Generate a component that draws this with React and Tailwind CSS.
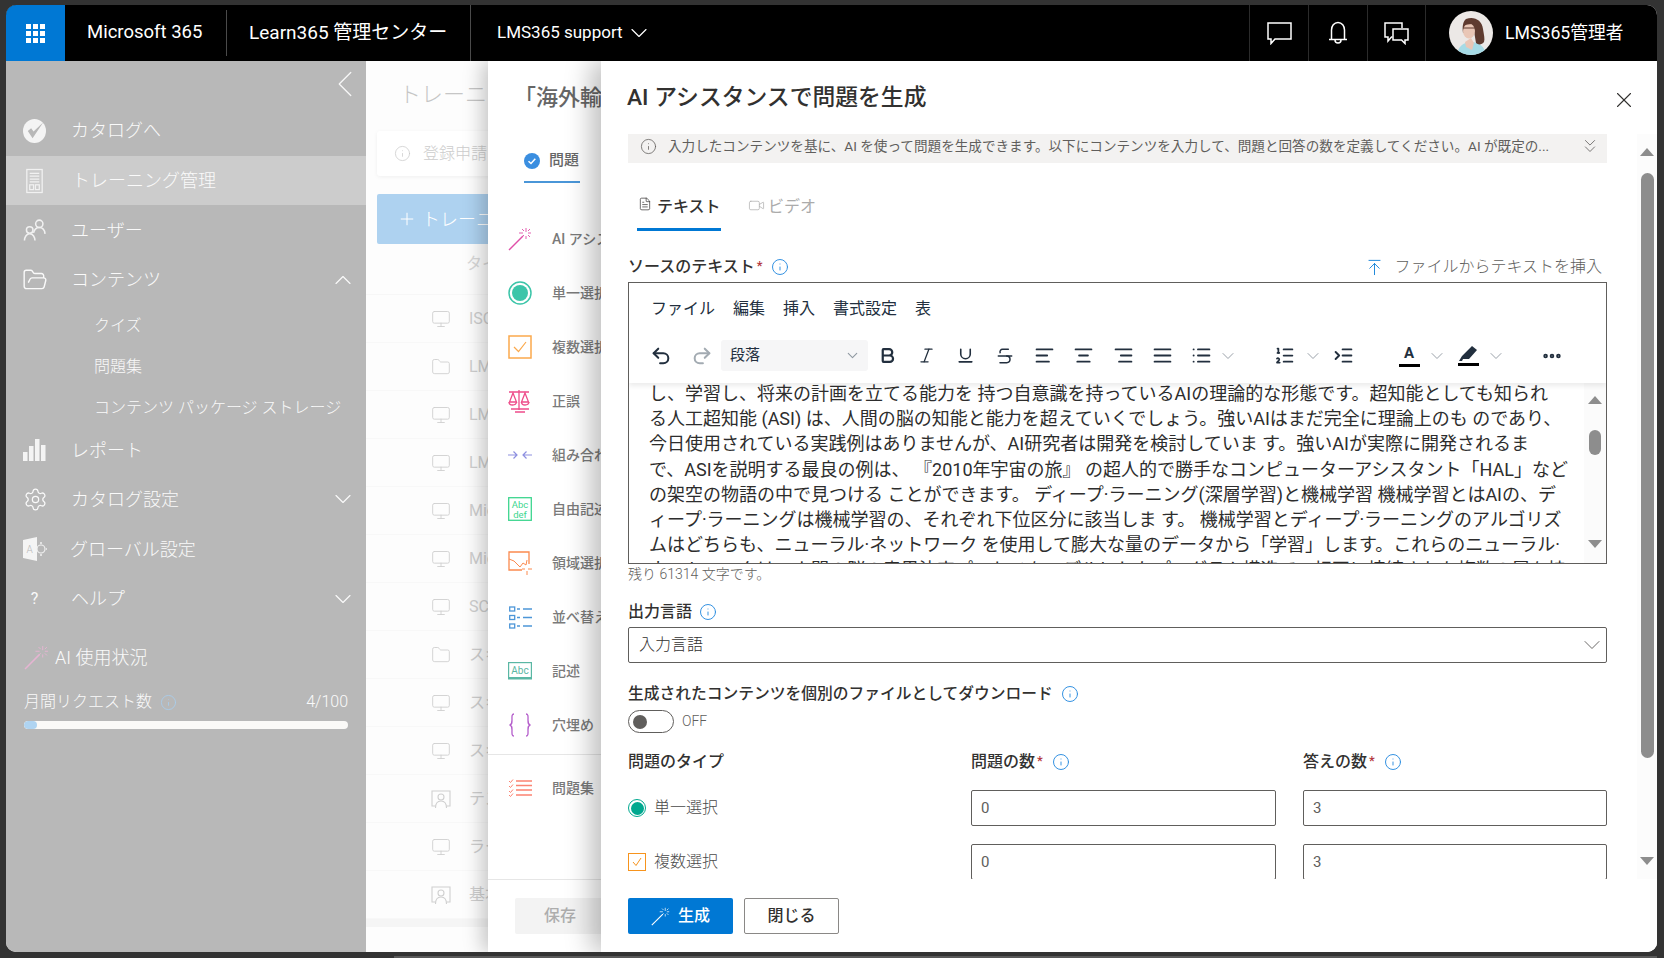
import React from "react";
import {
  ChevronDown,
  ChevronUp,
  ChevronLeft,
  ChevronsDown,
  X,
  Undo2,
  Redo2,
  Bold,
  Italic,
  Underline,
  Strikethrough,
  AlignLeft,
  AlignCenter,
  AlignRight,
  AlignJustify,
  List,
  ListOrdered,
  IndentIncrease,
  MoreHorizontal,
  Plus,
  Info,
  Monitor,
  Folder,
  FolderOpen,
  Settings,
  ArrowUpToLine,
  FileText,
  Video,
} from "lucide-react";

const FONT = "[font-family:Roboto,'Noto_Sans_CJK_JP',sans-serif]";

const Wand = ({ color, size = 24, spark }) => (
  <svg width={size} height={size} viewBox="0 0 24 24" fill="none" stroke={color} strokeWidth="1">
    <path d="M1 23 L15 9" strokeWidth="1.4" />
    <path d="M18 1v4M18 9v3M11 6h4M20 6h3M14 2l2 2M20 8l2 2M22 2l-2 2M14 10l2-2" stroke={spark || color} strokeWidth="0.9" />
  </svg>
);

const Sidebar = () => {
  const main = "flex items-center pl-[17px] pr-[9px] text-[18px] font-light text-[#fafafa]";
  const sub = "h-[41px] flex items-center pl-[88px] text-[16px] font-light text-[#fafafa] whitespace-nowrap";
  return (
    <div className="w-[360px] shrink-0 bg-[#b8b8b8] flex flex-col">
      <div className="h-[45px] flex items-center pl-[316px] pt-[1px]">
        <ChevronLeft size={46} strokeWidth={0.7} className="text-[#f5f5f5] shrink-0" />
      </div>
      <div className={`${main} h-[50px] pb-[1px]`}>
        <svg width="23" height="26" viewBox="0 0 24 26" className="shrink-0">
          <ellipse cx="12" cy="13" rx="12" ry="12.5" fill="#f4f4f4" />
          <path d="M5 13 L10 20.500 L21 4 L11 13.500 L8.500 10 Z" fill="#b8b8b8" />
        </svg>
        <span className="ml-[25px]">カタログへ</span>
      </div>
      <div className={`${main} h-[49px] bg-[#cccccc]`}>
        <svg width="23" height="26" viewBox="0 0 24 26" fill="none" stroke="#f1f1f1" strokeWidth="1.3" className="shrink-0">
          <rect x="4" y="1" width="16" height="24" />
          <path d="M7 5h10M7 8h10M7 11h10M7 14h10" />
          <rect x="7" y="17" width="4" height="5" />
          <rect x="13" y="17" width="4" height="5" />
        </svg>
        <span className="ml-[26px]">トレーニング管理</span>
      </div>
      <div className={`${main} h-[50px]`}>
        <svg width="23" height="24" viewBox="0 0 24 24" fill="none" stroke="#f1f1f1" strokeWidth="1.6" className="shrink-0">
          <circle cx="17" cy="5.500" r="3.800" />
          <circle cx="7" cy="12" r="3.400" />
          <path d="M1.500 23c0-3.500 2-7 5.500-7s5.500 3.500 5.500 7" />
          <path d="M11 15c1-4 3-5.500 6-5.500s5.500 2 6 6.500" />
        </svg>
        <span className="ml-[25px]">ユーザー</span>
      </div>
      <div className={`${main} h-[49px]`}>
        <FolderOpen size={26} strokeWidth={1.3} className="shrink-0 -ml-[1px]" />
        <span className="ml-[23px]">コンテンツ</span>
        <ChevronUp size={28} strokeWidth={1} className="ml-auto" />
      </div>
      <div className={`${sub} mt-[1px]`}>クイズ</div>
      <div className={sub}>問題集</div>
      <div className={sub}>コンテンツ パッケージ ストレージ</div>
      <div className={`${main} h-[48px] -mt-[2px]`}>
        <svg width="23" height="22" viewBox="0 0 23 22" fill="#f4f4f4" className="shrink-0">
          <rect x="0" y="13" width="4.500" height="9" />
          <rect x="6" y="7" width="4.500" height="15" />
          <rect x="12" y="0" width="4.500" height="22" />
          <rect x="18" y="6" width="4.500" height="16" />
        </svg>
        <span className="ml-[25px]">レポート</span>
      </div>
      <div className={`${main} h-[50px]`}>
        <Settings size={25} strokeWidth={1.2} className="shrink-0" />
        <span className="ml-[23px]">カタログ設定</span>
        <ChevronDown size={28} strokeWidth={1} className="ml-auto" />
      </div>
      <div className={`${main} h-[50px]`}>
        <svg width="24" height="24" viewBox="0 0 24 24" className="shrink-0">
          <path d="M0 3 L14 0 V24 L0 21Z" fill="#f4f4f4" />
          <text x="3.500" y="16" fontSize="10" fill="#b8b8b8" fontFamily="Roboto">A</text>
          <circle cx="18" cy="12" r="4" fill="none" stroke="#f1f1f1" strokeWidth="1.200" />
          <path d="M18 5v2M18 17v2M23 12h1" stroke="#f1f1f1" strokeWidth="1.500" />
        </svg>
        <span className="ml-[23px]">グローバル設定</span>
      </div>
      <div className={`${main} h-[49px]`}>
        <span className="w-[23px] text-center text-[16px] font-normal shrink-0">?</span>
        <span className="ml-[25px]">ヘルプ</span>
        <ChevronDown size={28} strokeWidth={1} className="ml-auto" />
      </div>
      <div className="flex items-center pl-[18px] mt-[21px] text-[18px] text-[#fafafa] font-light">
        <Wand color="#e6b4d2" size={25} />
        <span className="ml-[6px]">AI 使用状況</span>
      </div>
      <div className="flex items-center pl-[18px] pr-[18px] mt-[19px] text-[16px] text-[#fafafa] font-light">
        <span>月間リクエスト数</span>
        <Info size={17} strokeWidth={1.2} className="ml-[8px] text-[#a9cdec]" />
        <span className="ml-auto">4/100</span>
      </div>
      <div className="mx-[18px] mt-[7px] h-[8px] bg-[#faf9f7] rounded-full overflow-hidden">
        <div className="w-[13px] h-full bg-[#afd4f2] rounded-full" />
      </div>
    </div>
  );
};

const ListRow = ({ icon, label }) => (
  <div className="h-[48px] shrink-0 flex items-center pl-[65px] border-b border-[#f8f8f8] whitespace-nowrap">
    {icon === "folder" && <Folder size={20} strokeWidth={1.1} className="text-[#d0d0d0] shrink-0" />}
    {icon === "monitor" && <Monitor size={20} strokeWidth={1.1} className="text-[#d0d0d0] shrink-0" />}
    {icon === "person" && (
      <svg width="20" height="20" viewBox="0 0 20 20" fill="none" stroke="#d0d0d0" strokeWidth="1.100" className="shrink-0">
        <path d="M4 17H1V2h18v15h-3" />
        <circle cx="10" cy="8" r="3" />
        <path d="M4.500 19c0-4 2-7 5.500-7s5.500 3 5.500 7" />
      </svg>
    )}
    <span className="ml-[18px] text-[16px] text-[#cfcfcf]">{label}</span>
  </div>
);

const Behind = () => {
  const rows = [
    ["monitor", "ISO 27001"],
    ["folder", "LMS365"],
    ["monitor", "LMS365"],
    ["monitor", "LMS365"],
    ["monitor", "Microsoft"],
    ["monitor", "Microsoft"],
    ["monitor", "SCORM"],
    ["folder", "スキル"],
    ["monitor", "スキル"],
    ["monitor", "スキル"],
    ["person", "テスト"],
    ["monitor", "ラーニング"],
    ["person", "基本"],
  ];
  return (
    <div className="w-[122px] shrink-0 bg-[#fdfdfd] overflow-hidden flex flex-col">
      <div className="h-[66px] shrink-0 flex items-center pl-[33px] text-[22px] font-light text-[#c6c6c6] whitespace-nowrap">トレーニング管理</div>
      <div className="ml-[11px] w-[300px] h-[45px] shrink-0 mt-[4px] bg-white rounded-[3px] shadow-[0_1px_4px_rgba(0,0,0,0.06)] flex items-center pl-[17px] whitespace-nowrap">
        <Info size={17} strokeWidth={1} className="text-[#c8c8c8] shrink-0" />
        <span className="ml-[12px] text-[16px] font-light text-[#cdcdcd]">登録申請</span>
      </div>
      <div className="ml-[11px] w-[300px] h-[50px] shrink-0 mt-[18px] bg-[#aed2f0] rounded-[2px] flex items-center pl-[20px] text-[18px] font-light text-white whitespace-nowrap">
        <Plus size={20} strokeWidth={1.2} />
        <span className="ml-[5px]">トレーニング</span>
      </div>
      <div className="h-[51px] shrink-0 flex items-start pt-[8px] pl-[100px] text-[16px] text-[#d8d8d8] border-b border-[#f7f7f7] whitespace-nowrap">タイトル</div>
      {rows.map((r, i) => (
        <ListRow key={i} icon={r[0]} label={r[1]} />
      ))}
      <div className="h-[8px] shrink-0 bg-[#f5f5f5]" />
    </div>
  );
};

const TypeIcon = ({ kind }) => {
  switch (kind) {
    case "ai":
      return <Wand color="#e04fa8" spark="#e04fa8" />;
    case "single":
      return (
        <svg width="24" height="24" viewBox="0 0 24 24">
          <circle cx="12" cy="12" r="11" fill="none" stroke="#3cc5a9" strokeWidth="1.500" />
          <circle cx="12" cy="12" r="8" fill="#3cc5a9" />
        </svg>
      );
    case "multi":
      return (
        <svg width="24" height="24" viewBox="0 0 24 24" fill="none" stroke="#fba94c" strokeWidth="1.500">
          <rect x="1" y="1" width="22" height="22" />
          <path d="M6 12l4.500 4.500L18 7" strokeWidth="1.200" />
        </svg>
      );
    case "tf":
      return (
        <svg width="24" height="25" viewBox="0 0 24 25" fill="none" stroke="#ee4c8a" strokeWidth="1.300">
          <path d="M1 3h20M11 1v20M3 20h18M7 23h10" />
          <path d="M5 4L1.500 13h7zM17 4l-3.500 9h7z" />
          <path d="M1 13c0 4 7 4 7.500 0M13.500 13c0 4 7 4 7.500 0" />
        </svg>
      );
    case "match":
      return (
        <svg width="24" height="12" viewBox="0 0 24 12" fill="none" stroke="#8d8fe0" strokeWidth="1.200">
          <path d="M0 6h9M5.500 2.500L9 6l-3.500 3.500M24 6h-9M18.500 2.500L15 6l3.500 3.500" />
        </svg>
      );
    case "free":
      return (
        <svg width="24" height="24" viewBox="0 0 24 24">
          <rect x="0.700" y="0.700" width="22.600" height="22.600" fill="none" stroke="#3dd68f" strokeWidth="1.300" />
          <text x="12" y="11" textAnchor="middle" fontSize="9.500" fill="#3dd68f" fontFamily="Roboto">Abc</text>
          <text x="12" y="20.500" textAnchor="middle" fontSize="9.500" fill="#3dd68f" fontFamily="Roboto">def</text>
        </svg>
      );
    case "region":
      return (
        <svg width="24" height="25" viewBox="0 0 24 25" fill="none" stroke="#fb8a4f" strokeWidth="1.300">
          <path d="M14 19H1V1h20v12" />
          <path d="M1 8l5 2 6 6 3-4 3 2 1-5" strokeWidth="1" />
          <path d="M14 18h3M20 18h4M19 20v4" strokeWidth="1" />
        </svg>
      );
    case "order":
      return (
        <svg width="23" height="23" viewBox="0 0 23 23" fill="none" stroke="#4d96d8" strokeWidth="1.300">
          <rect x="0.700" y="1" width="5" height="4" />
          <rect x="0.700" y="9.500" width="5" height="4" />
          <rect x="0.700" y="18" width="5" height="4" />
          <path d="M8 3h3M14 3h9M8 11.500h3M14 11.500h9M8 20h3M14 20h9" />
        </svg>
      );
    case "essay":
      return (
        <svg width="24" height="18" viewBox="0 0 24 18">
          <rect x="0.600" y="0.600" width="22.800" height="15" fill="none" stroke="#5ab7a4" strokeWidth="1.200" />
          <rect x="0" y="15.500" width="24" height="2" fill="#5ab7a4" />
          <text x="12" y="11.500" textAnchor="middle" fontSize="10" fill="#5ab7a4" fontFamily="Roboto">Abc</text>
        </svg>
      );
    case "blank":
      return (
        <svg width="22" height="24" viewBox="0 0 22 24" fill="none" stroke="#b45dcb" strokeWidth="1.300">
          <path d="M5 1C2.500 1 3 4 3 7s0 4-2 5c2 1 2 2 2 5s-.5 6 2 6" />
          <path d="M17 1c2.500 0 2 3 2 6s0 4 2 5c-2 1-2 2-2 5s.5 6-2 6" />
        </svg>
      );
    default:
      return (
        <svg width="24" height="18" viewBox="0 0 24 18" fill="none" stroke="#fb8372" strokeWidth="1.300">
          <path d="M8 2h16M8 6.500h16M8 11h16M8 16h16" strokeWidth="1.500" />
          <path d="M1 2l1.500 1.500L5 .5M1 7l1.500 1.500L5 5.500M1 12l1.500 1.500L5 10.500M1 16l1.500 1.500L5 14.500" strokeWidth="1" />
        </svg>
      );
  }
};

const Types = () => {
  const items = [
    ["ai", "AI アシスタンス"],
    ["single", "単一選択"],
    ["multi", "複数選択"],
    ["tf", "正誤"],
    ["match", "組み合わせ"],
    ["free", "自由記述"],
    ["region", "領域選択"],
    ["order", "並べ替え"],
    ["essay", "記述"],
    ["blank", "穴埋め"],
  ];
  return (
    <div className="relative z-10 w-[113px] shrink-0 bg-white overflow-hidden flex flex-col shadow-[-6px_0_18px_rgba(0,0,0,0.22)]">
      <div className="h-[72px] shrink-0 flex items-center pl-[26px] text-[22px] font-medium text-[#666666] whitespace-nowrap">「海外輸送について」</div>
      <div className="ml-[36px] w-[56px] h-[50px] shrink-0 border-b-2 border-[#4a96d8] flex items-center pt-[7px] whitespace-nowrap">
        <svg width="16" height="16" viewBox="0 0 16 16" className="shrink-0">
          <circle cx="8" cy="8" r="8" fill="#3a8ee0" />
          <path d="M4.500 8.200l2.500 2.300 4.300-4.700" fill="none" stroke="#fff" strokeWidth="1.500" />
        </svg>
        <span className="ml-[9px] text-[15px] font-medium text-[#666666]">問題</span>
      </div>
      <div className="h-[29px] shrink-0" />
      {items.map((it) => (
        <div key={it[0]} className="h-[54px] shrink-0 flex items-center pl-[20px] whitespace-nowrap">
          <div className="w-[24px] flex justify-center shrink-0">
            <TypeIcon kind={it[0]} />
          </div>
          <span className="ml-[20px] text-[14px] font-medium text-[#7a7a7a]">{it[1]}</span>
        </div>
      ))}
      <div className="h-[4px] shrink-0 border-b border-[#e6e6e6] -mt-[1px]" />
      <div className="h-[66px] shrink-0 flex items-center pl-[20px] whitespace-nowrap">
        <div className="w-[24px] flex justify-center shrink-0">
          <TypeIcon kind="set" />
        </div>
        <span className="ml-[20px] text-[14px] font-medium text-[#7a7a7a]">問題集</span>
      </div>
      <div className="flex-1" />
      <div className="h-[73px] shrink-0 border-t border-[#e6e6e6] pl-[27px] pt-[18px] whitespace-nowrap">
        <div className="w-[120px] h-[36px] bg-[#f3f3f3] rounded-[2px] flex items-center pl-[29px] text-[16px] font-medium text-[#adadad]">保存</div>
      </div>
    </div>
  );
};

const InfoDot = ({ className = "" }) => (
  <Info size={18} strokeWidth={1.3} className={`text-[#2f8fe0] shrink-0 ${className}`} />
);

const Tool = ({ children, className = "" }) => (
  <div className={`flex items-center justify-center shrink-0 ${className}`}>{children}</div>
);

const Caret = ({ className = "" }) => (
  <ChevronDown size={20} strokeWidth={1.2} className={`text-[#9aa1a9] shrink-0 ${className}`} />
);

const Editor = () => {
  const lines = [
    "し、学習し、将来の計画を立てる能力を 持つ自意識を持っているAIの理論的な形態です。超知能としても知られ",
    "る人工超知能 (ASI) は、人間の脳の知能と能力を超えていくでしょう。強いAIはまだ完全に理論上のも のであり、",
    "今日使用されている実践例はありませんが、AI研究者は開発を検討していま す。強いAIが実際に開発されるま",
    "で、ASIを説明する最良の例は、 『2010年宇宙の旅』 の超人的で勝手なコンピューターアシスタント「HAL」など",
    "の架空の物語の中で見つける ことができます。 ディープ·ラーニング(深層学習)と機械学習 機械学習とはAIの、デ",
    "ィープ·ラーニングは機械学習の、それぞれ下位区分に該当しま す。 機械学習とディープ·ラーニングのアルゴリズ",
    "ムはどちらも、ニューラル·ネットワーク を使用して膨大な量のデータから「学習」します。これらのニューラル·",
    "ネットワークは、人間の脳の意思決定プロセスをモデルにしたプログラム構造で、相互に接続された複数の層を持",
  ];
  return (
    <div className="mt-[3px] h-[282px] border border-[#605e5c] flex flex-col overflow-hidden">
      <div className="relative z-10 h-[100px] shrink-0 bg-white text-[#222f3e] shadow-[0_3px_5px_rgba(0,0,0,0.08)]">
        <div className="h-[57px] flex items-start pt-[14px] pl-[22px] gap-[18px] text-[16px]">
          <span>ファイル</span>
          <span>編集</span>
          <span>挿入</span>
          <span>書式設定</span>
          <span>表</span>
        </div>
        <div className="h-[31px] flex items-center pl-[20px]">
          <Tool className="w-[24px]">
            <Undo2 size={22} strokeWidth={2.2} />
          </Tool>
          <Tool className="w-[24px] ml-[17px]">
            <Redo2 size={22} strokeWidth={2.2} className="text-[#a3abb2]" />
          </Tool>
          <div className="ml-[7px] w-[147px] h-[31px] bg-[#f6f6f7] rounded-[3px] flex items-center justify-between pl-[9px] pr-[7px] text-[15px]">
            <span>段落</span>
            <ChevronDown size={17} strokeWidth={1.5} className="text-[#8f98a1]" />
          </div>
          <Tool className="w-[24px] ml-[7px]">
            <Bold size={19} strokeWidth={2.8} />
          </Tool>
          <Tool className="w-[24px] ml-[15px]">
            <Italic size={19} strokeWidth={1.6} />
          </Tool>
          <Tool className="w-[24px] ml-[15px]">
            <Underline size={19} strokeWidth={2} />
          </Tool>
          <Tool className="w-[24px] ml-[16px]">
            <Strikethrough size={20} strokeWidth={1.8} />
          </Tool>
          <Tool className="w-[24px] ml-[15px]">
            <AlignLeft size={21} strokeWidth={2.2} />
          </Tool>
          <Tool className="w-[24px] ml-[15px]">
            <AlignCenter size={21} strokeWidth={2.2} />
          </Tool>
          <Tool className="w-[24px] ml-[16px]">
            <AlignRight size={21} strokeWidth={2.2} />
          </Tool>
          <Tool className="w-[24px] ml-[15px]">
            <AlignJustify size={21} strokeWidth={2.2} />
          </Tool>
          <Tool className="w-[24px] ml-[15px]">
            <List size={21} strokeWidth={2.2} />
          </Tool>
          <Caret className="ml-[5px]" />
          <Tool className="w-[24px] ml-[34px]">
            <ListOrdered size={21} strokeWidth={2} />
          </Tool>
          <Caret className="ml-[7px]" />
          <Tool className="w-[24px] ml-[8px]">
            <IndentIncrease size={21} strokeWidth={2.2} />
          </Tool>
          <div className="w-[24px] h-[26px] ml-[42px] flex flex-col items-center justify-center shrink-0">
            <span className="text-[15px] leading-[17px] font-bold [font-family:Roboto,sans-serif]">A</span>
            <span className="w-[21px] h-[3px] bg-[#000000] mt-[2px]" />
          </div>
          <Caret className="ml-[6px]" />
          <div className="w-[24px] h-[26px] ml-[9px] flex flex-col items-center justify-center shrink-0">
            <svg width="21" height="17" viewBox="0 0 21 17" fill="#222f3e">
              <path d="M14 1l5 4-8 9H5l-1 2H1l3-5z" />
            </svg>
            <span className="w-[21px] h-[3px] bg-[#000000] mt-[1px]" />
          </div>
          <Caret className="ml-[6px]" />
          <Tool className="w-[24px] ml-[34px]">
            <MoreHorizontal size={22} strokeWidth={3} />
          </Tool>
        </div>
      </div>
      <div className="flex-1 min-h-0 flex overflow-hidden">
        <div className="flex-1 min-w-0 pl-[20px] -mt-[2px] text-[18px] leading-[25.2px] text-[#2d2d2d] whitespace-nowrap">
          {lines.map((l, i) => (
            <div key={i}>{l}</div>
          ))}
        </div>
        <div className="relative w-[22px] shrink-0 bg-[#fbfbfb] flex flex-col items-center pt-[13px] pr-[1px]">
          <div className="w-0 h-0 border-x-[7px] border-x-transparent border-b-[8px] border-b-[#8d8d8d]" />
          <div className="mt-[26px] w-[12px] h-[25px] rounded-full bg-[#8d8d8d]" />
          <div className="mt-[85px] w-0 h-0 border-x-[7px] border-x-transparent border-t-[8px] border-t-[#8d8d8d]" />
        </div>
      </div>
    </div>
  );
};

const Label = ({ children, star, className = "" }) => (
  <div className={`flex items-center font-medium text-[#323130] whitespace-nowrap ${className || "text-[16px]"}`}>
    <span>{children}</span>
    {star && <span className="text-[#b3373e] text-[13px] ml-[2px] -mt-[3px]">*</span>}
  </div>
);

const NumField = ({ value }) => (
  <div className="h-[36px] w-full shrink-0 border border-[#605e5c] rounded-[2px] flex items-center pl-[9px] text-[15px] text-[#605e5c]">{value}</div>
);

const Dialog = () => (
  <div className="relative z-20 flex-1 min-w-0 bg-white flex flex-col shadow-[-10px_0_24px_rgba(0,0,0,0.25)]">
    <div className="h-[73px] shrink-0 flex items-center pl-[26px] pr-[20px] pt-[2px]">
      <span className="text-[22.8px] font-medium text-[#323130]">AI アシスタンスで問題を生成</span>
      <X size={26} strokeWidth={1} className="ml-auto mt-[3px] text-[#323130]" />
    </div>
    <div className="flex-1 min-h-0 flex">
      <div className="flex-1 min-w-0 pl-[27px] overflow-hidden">
        <div className="h-[29px] bg-[#f3f2f1] flex items-center pl-[12px] pr-[6px] pb-[5px] text-[13.6px] text-[#605e5c] whitespace-nowrap overflow-hidden">
          <Info size={17} strokeWidth={1.1} className="shrink-0 text-[#605e5c]" />
          <span className="ml-[11px] flex-1 min-w-0 overflow-hidden">
            入力したコンテンツを基に、AI を使って問題を生成できます。以下にコンテンツを入力して、問題と回答の数を定義してください。AI が既定の...
          </span>
          <ChevronsDown size={22} strokeWidth={0.9} className="ml-[8px] shrink-0 text-[#605e5c]" />
        </div>
        <div className="mt-[23px] h-[45px] flex pl-[9px] text-[16px] whitespace-nowrap">
          <div className="w-[84px] border-b-[3px] border-[#0078d4] flex items-start pt-[9px] pl-[1px] font-medium text-[#323130]">
            <FileText size={14} strokeWidth={1.2} className="mt-[2px] shrink-0" />
            <span className="ml-[5px]">テキスト</span>
          </div>
          <div className="ml-[27px] flex items-start pt-[9px] text-[#ababab]">
            <Video size={17} strokeWidth={1} className="mt-[2px] shrink-0" />
            <span className="ml-[3px]">ビデオ</span>
          </div>
        </div>
        <div className="mt-[24px] h-[24px] flex items-center">
          <Label star>ソースのテキスト</Label>
          <InfoDot className="ml-[8px]" />
          <ArrowUpToLine size={19} strokeWidth={1.1} className="ml-auto text-[#0078d4]" />
          <span className="ml-[10px] mr-[5px] text-[16px] font-light text-[#605e5c] whitespace-nowrap">ファイルからテキストを挿入</span>
        </div>
        <Editor />
        <div className="mt-[1px] h-[19px] flex items-center text-[14px] font-light text-[#605e5c]">残り 61314 文字です。</div>
        <div className="mt-[16px] h-[24px] flex items-center">
          <Label>出力言語</Label>
          <InfoDot className="ml-[7px]" />
        </div>
        <div className="mt-[3px] h-[36px] border border-[#605e5c] rounded-[2px] flex items-center justify-between pl-[10px] text-[16px] text-[#323130]">
          <span className="font-light">入力言語</span>
          <ChevronDown size={28} strokeWidth={0.8} className="text-[#605e5c]" />
        </div>
        <div className="mt-[19px] h-[24px] flex items-center">
          <Label className="text-[15.75px]">生成されたコンテンツを個別のファイルとしてダウンロード</Label>
          <InfoDot className="ml-[8px]" />
        </div>
        <div className="mt-[4px] h-[23px] flex items-center">
          <div className="w-[46px] h-[23px] border border-[#605e5c] rounded-full flex items-center pl-[4px]">
            <div className="w-[14px] h-[14px] rounded-full bg-[#605e5c]" />
          </div>
          <span className="ml-[8px] text-[14px] font-light text-[#605e5c]">OFF</span>
        </div>
        <div className="mt-[17px] grid grid-cols-[343px_305px_304px] items-center">
          <Label className="h-[24px] text-[16px]">問題のタイプ</Label>
          <div className="flex items-center h-[24px]">
            <Label star>問題の数</Label>
            <InfoDot className="ml-[9px]" />
          </div>
          <div className="flex items-center h-[24px] ml-[27px]">
            <Label star>答えの数</Label>
            <InfoDot className="ml-[9px]" />
          </div>
        </div>
        <div className="mt-[16px] grid grid-cols-[343px_305px_331px] items-center">
          <div className="flex items-center">
            <div className="w-[18px] h-[18px] rounded-full border border-[#00a88f] flex items-center justify-center">
              <div className="w-[13px] h-[13px] rounded-full bg-[#00a88f]" />
            </div>
            <span className="ml-[8px] text-[16px] font-light text-[#4a4a4a]">単一選択</span>
          </div>
          <NumField value="0" />
          <div className="pl-[27px]">
            <NumField value="3" />
          </div>
        </div>
        <div className="mt-[18px] grid grid-cols-[343px_305px_331px] items-center">
          <div className="flex items-center">
            <div className="w-[18px] h-[18px] border-[1.5px] border-[#f7941d] flex items-center justify-center">
              <svg width="12" height="12" viewBox="0 0 12 12" fill="none" stroke="#f7941d" strokeWidth="1">
                <path d="M2 6l3 3.500L10 2" />
              </svg>
            </div>
            <span className="ml-[8px] text-[16px] font-light text-[#4a4a4a]">複数選択</span>
          </div>
          <NumField value="0" />
          <div className="pl-[27px]">
            <NumField value="3" />
          </div>
        </div>
      </div>
      <div className="w-[50px] shrink-0 flex flex-col items-end">
        <div className="w-[20px] bg-[#fcfcfc] h-[745px] flex flex-col items-center pt-[14px]">
          <div className="w-0 h-0 border-x-[7px] border-x-transparent border-b-[8px] border-b-[#8d8d8d]" />
          <div className="mt-[17px] w-[13px] h-[585px] rounded-full bg-[#8d8d8d]" />
          <div className="mt-[99px] w-0 h-0 border-x-[7px] border-x-transparent border-t-[8px] border-t-[#8d8d8d]" />
        </div>
      </div>
    </div>
    <div className="h-[73px] shrink-0 bg-white flex items-start pt-[19px] pl-[27px] gap-[11px]">
      <div className="w-[105px] h-[36px] bg-[#0078d4] rounded-[2px] flex items-center justify-center text-[16px] font-medium text-white">
        <Wand color="#ffffff" size={19} />
        <span className="ml-[8px]">生成</span>
      </div>
      <div className="w-[95px] h-[36px] bg-white border border-[#8a8886] rounded-[2px] flex items-center justify-center text-[16px] font-medium text-[#323130]">閉じる</div>
    </div>
  </div>
);

const Avatar = () => (
  <svg width="44" height="44" viewBox="0 0 44 44" className="shrink-0 rounded-full">
    <rect width="44" height="44" fill="#ece8e6" />
    <path d="M8 44c1-8 6-13 14-13s14 5 15 13z" fill="#a6dbe6" />
    <path d="M17 8c8-3 16 1 17 10 1 6 2 10 1 13-2 3-6 3-8 1l-2-12-8-1-3 3c-1-6 0-12 3-14z" fill="#5f3b30" />
    <ellipse cx="20" cy="20" rx="6" ry="7.500" fill="#e9c6b6" />
    <path d="M14 17h12" stroke="#5f3b30" strokeWidth="1" />
    <path d="M14 15c3-5 9-5 12-2-3 0-8 0-12 2z" fill="#5f3b30" />
    <path d="M16 31l6-4 3 5-2 7-6-3z" fill="#e9c6b6" />
  </svg>
);

const Header = () => (
  <div className="h-[56px] shrink-0 bg-black flex items-stretch text-white">
    <div className="w-[59px] bg-[#0078d4] flex items-center justify-center">
      <div className="grid grid-cols-3 gap-[2px]">
        {[...Array(9)].map((_, i) => (
          <span key={i} className="w-[5px] h-[5px] bg-white" />
        ))}
      </div>
    </div>
    <div className="w-[161px] flex items-center pl-[22px] text-[18.5px] whitespace-nowrap">Microsoft 365</div>
    <div className="w-px my-[5px] bg-[#4a4a4a]" />
    <div className="w-[243px] flex items-center pl-[22px] text-[19px] whitespace-nowrap">Learn365 管理センター</div>
    <div className="w-px bg-[#4a4a4a]" />
    <div className="flex items-center pl-[26px] text-[17px] whitespace-nowrap">
      <span>LMS365 support</span>
      <ChevronDown size={28} strokeWidth={1} className="ml-[2px]" />
    </div>
    <div className="ml-auto flex items-stretch">
      <div className="w-[59px] border-l border-[#2b2b2b] flex items-center justify-center">
        <svg width="25" height="24" viewBox="0 0 25 24" fill="none" stroke="#fff" strokeWidth="1.500">
          <path d="M1 2h23v16H8l-4 4.500V18H1z" />
        </svg>
      </div>
      <div className="w-[59px] border-l border-[#2b2b2b] flex items-center justify-center">
        <svg width="20" height="24" viewBox="0 0 20 24" fill="none" stroke="#fff" strokeWidth="1.500">
          <path d="M3.500 18V9c0-4 2.500-7.500 6.500-7.500s6.500 3.500 6.500 7.500v9" />
          <path d="M1 18.500h18M7 19c0 4 6 4 6 0" />
        </svg>
      </div>
      <div className="w-[58px] border-l border-[#2b2b2b] flex items-center justify-center">
        <svg width="25" height="24" viewBox="0 0 25 24" fill="none" stroke="#fff" strokeWidth="1.500">
          <path d="M18 7V2H1v14h3v4l3.500-4h1" />
          <path d="M9 8h15v11h-3v3.500L17.500 19H9z" />
        </svg>
      </div>
      <div className="w-[232px] border-l border-[#2b2b2b] flex items-center pl-[23px]">
        <Avatar />
        <span className="ml-[12px] text-[17.7px] whitespace-nowrap">LMS365管理者</span>
      </div>
    </div>
  </div>
);

export default function App() {
  return (
    <div className={`w-screen h-screen overflow-hidden bg-[#333333] pt-[5px] pl-[6px] pr-[7px] ${FONT}`}>
      <div className="h-[947px] rounded-[10px] overflow-hidden flex flex-col bg-white">
        <Header />
        <div className="flex-1 min-h-0 flex overflow-hidden">
          <Sidebar />
          <Behind />
          <Types />
          <Dialog />
        </div>
      </div>
      <div className="mt-[4px] ml-[388px] h-[2px] bg-[#5a5a5a]" />
    </div>
  );
}
